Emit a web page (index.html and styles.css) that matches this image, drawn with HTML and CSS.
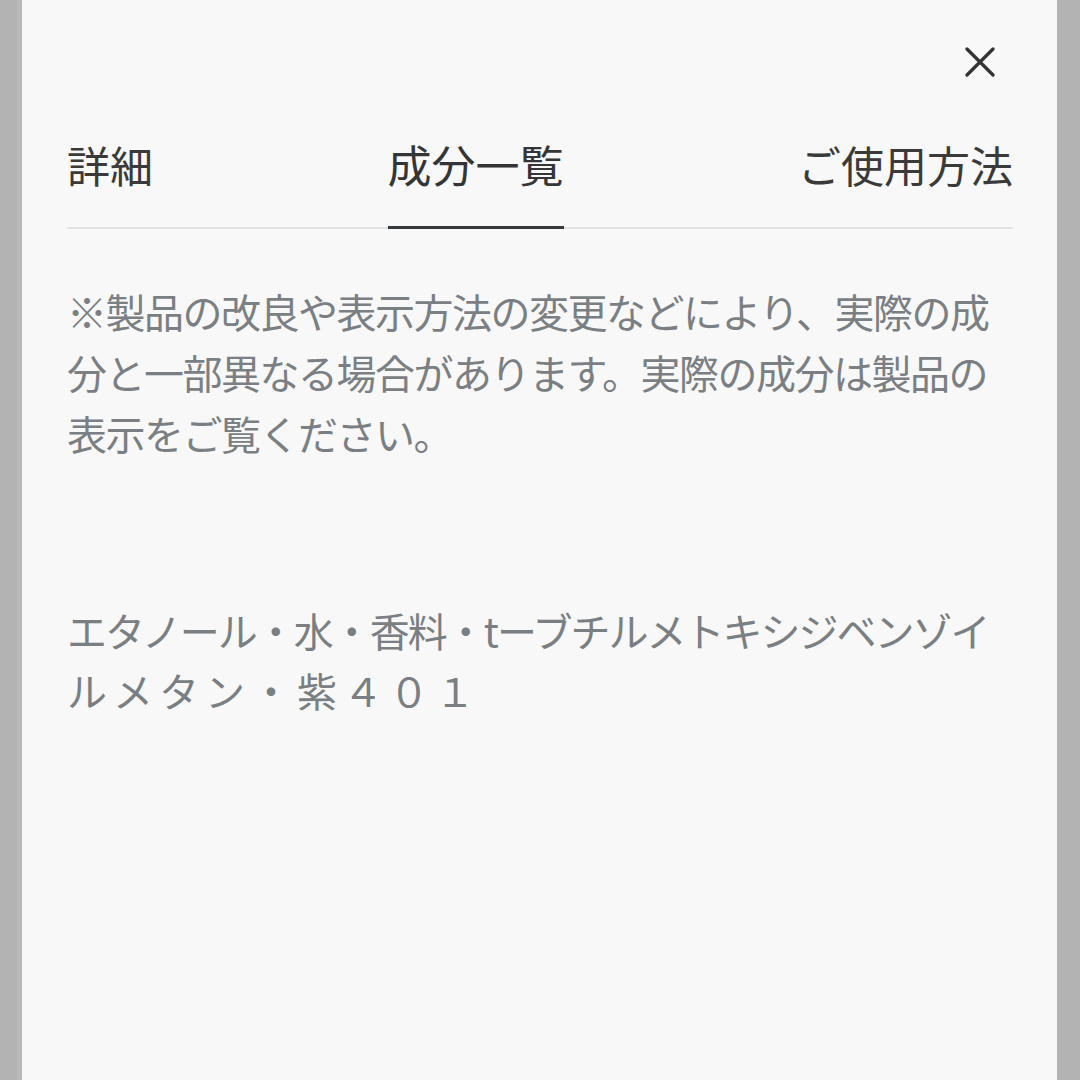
FILE: index.html
```html
<!DOCTYPE html>
<html lang="ja">
<head>
<meta charset="utf-8">
<title>成分一覧</title>
<link rel="stylesheet" href="styles.css">
</head>
<body>
<div class="screen">
  <section class="sheet">
    <div class="close-row">
      <button class="close" aria-label="閉じる">
        <svg viewBox="0 0 30 30" width="30" height="30"><path d="M2 2 L28 28 M28 2 L2 28" stroke="#333" stroke-width="3.2" stroke-linecap="round" fill="none"/></svg>
      </button>
    </div>
    <nav class="tabs">
      <div class="tab">詳細</div>
      <div class="tab active">成分一覧</div>
      <div class="tab">ご使用方法</div>
    </nav>
    <p class="note">※製品の改良や表示方法の変更などにより、実際の成分と一部異なる場合があります。実際の成分は製品の表示をご覧ください。</p>
    <p class="note ingredients">エタノール・水・香料・tーブチルメトキシジベンゾイ<span class="tail">ルメタン・紫４０１</span></p>
  </section>
</div>
</body>
</html>
```
FILE: styles.css
```css
html, body {
  margin: 0;
  padding: 0;
}
body {
  background: #b3b3b3;
  font-family: "Noto Sans CJK JP", "Noto Sans", sans-serif;
}
.screen {
  display: flex;
  height: 1080px;
  padding-left: 17px;
  overflow: hidden;
}
.sheet {
  box-sizing: border-box;
  width: 1040px;
  height: 1080px;
  border-left: 5px solid #b9b9b9;
  background: #f8f8f8;
  padding: 47px 44px 0 45px;
}
.close-row {
  display: flex;
  justify-content: flex-end;
  padding-right: 18px;
  height: 30px;
}
.close {
  width: 30px;
  height: 30px;
  padding: 0;
  margin: 0;
  border: 0;
  background: none;
  display: block;
}
.close svg {
  display: block;
}
.tabs {
  display: flex;
  justify-content: space-between;
  margin-top: 57px;
  border-bottom: 2px solid #e3e3e3;
}
.tab {
  font-size: 43px;
  line-height: 60px;
  padding-bottom: 32px;
  border-bottom: 3px solid transparent;
  margin-bottom: -2px;
  color: #3a3a3a;
}
.tab.active {
  font-size: 44px;
  color: #333537;
  border-bottom-color: #36393c;
}
.note {
  margin: 52px 0 0;
  font-size: 40px;
  line-height: 61px;
  letter-spacing: -1.5px;
  color: #7a7f83;
}
.ingredients {
  margin-top: 136px;
  line-height: 60px;
  letter-spacing: -2px;
}
.tail {
  letter-spacing: 6px;
}
```
